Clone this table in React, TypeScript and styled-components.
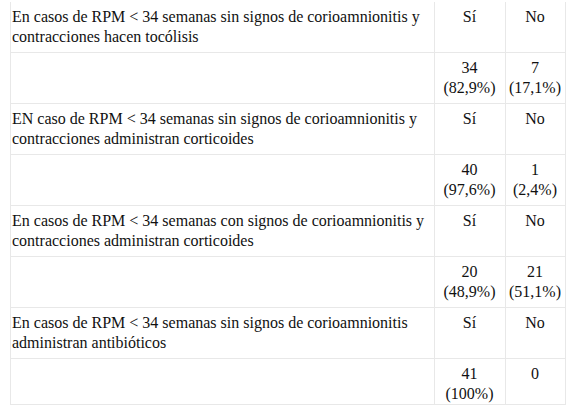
import * as React from 'react';
import styled, { createGlobalStyle } from 'styled-components';

const GlobalStyle = createGlobalStyle`
    html, body {
        margin: 0;
        padding: 0;
        background: #ffffff;
    }
`;

const Wrapper = styled.div`
    padding: 0 10px;
    font-family: 'Liberation Serif', 'Times New Roman', serif;
    font-size: 16px;
    line-height: 20px;
    color: #111111;
`;

const Table = styled.table`
    width: 556px;
    border-collapse: collapse;
    border-top: hidden;
    margin-top: 2px;
`;

const Cell = styled.td<{ $center?: boolean; $width?: number; $last?: boolean }>`
    border: 1px solid #e8e8e8;
    padding: 5px 2px ${(props) => (props.$last ? '0' : '5px')} 1px;
    vertical-align: top;
    text-align: ${(props) => (props.$center ? 'center' : 'left')};
    width: ${(props) => (props.$width ? `${props.$width}px` : 'auto')};
`;

const Line = styled.div`
    white-space: nowrap;
`;

interface IRow {
    label: string;
    si: [string, string?];
    no: [string, string?];
}

const rows: IRow[] = [
    {
        label: 'En casos de RPM < 34 semanas sin signos de corioamnionitis y contracciones hacen tocólisis',
        si: ['34', '(82,9%)'],
        no: ['7', '(17,1%)'],
    },
    {
        label: 'EN caso de RPM < 34 semanas sin signos de corioamnionitis y contracciones administran corticoides',
        si: ['40', '(97,6%)'],
        no: ['1', '(2,4%)'],
    },
    {
        label: 'En casos de RPM < 34 semanas con signos de corioamnionitis y contracciones administran corticoides',
        si: ['20', '(48,9%)'],
        no: ['21', '(51,1%)'],
    },
    {
        label: 'En casos de RPM < 34 semanas sin signos de corioamnionitis administran antibióticos',
        si: ['41', '(100%)'],
        no: ['0'],
    },
];

const Value = ({ lines }: { lines: [string, string?] }) => (
    <>
        {lines.map((l, i) => (l ? <Line key={i}>{l}</Line> : null))}
    </>
);

const App = () => (
    <Wrapper>
        <GlobalStyle />
        <Table>
            <tbody>
                {rows.map((row, i) => {
                    const last = i === rows.length - 1;
                    return (
                        <React.Fragment key={i}>
                            <tr>
                                <Cell>{row.label}</Cell>
                                <Cell $center $width={67}>Sí</Cell>
                                <Cell $center $width={56}>No</Cell>
                            </tr>
                            <tr>
                                <Cell $last={last}>
                                    <Line>&nbsp;</Line>
                                    <Line>&nbsp;</Line>
                                </Cell>
                                <Cell $center $last={last}>
                                    <Value lines={row.si} />
                                </Cell>
                                <Cell $center $last={last}>
                                    <Value lines={row.no} />
                                </Cell>
                            </tr>
                        </React.Fragment>
                    );
                })}
            </tbody>
        </Table>
    </Wrapper>
);

export default App;
